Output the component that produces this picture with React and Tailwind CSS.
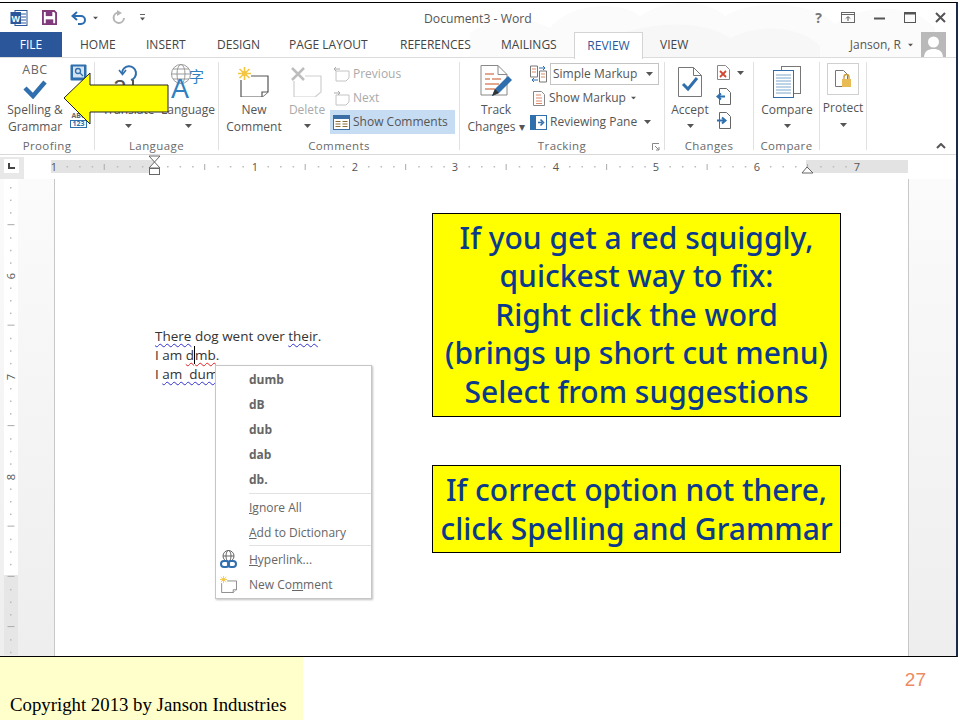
import React from "react";

const Caret = ({ className = "" }) => (
  <svg width="7" height="4" viewBox="0 0 7 4" className={className}><path d="M0 0h7L3.500 4z" fill="#555" /></svg>
);

const WordLogo = () => (
  <svg width="18" height="18" viewBox="0 0 18 18">
    <rect x="5" y="1.500" width="12" height="15" fill="#fff" stroke="#2b579a" />
    <path d="M11 5h5M11 8h5M11 11h5M11 14h5" stroke="#2b579a" />
    <rect x="0.500" y="3" width="10.500" height="12" fill="#2b579a" />
    <text x="5.700" y="12.500" textAnchor="middle" fontSize="9" fontWeight="700" fill="#fff" fontFamily="Liberation Sans">W</text>
  </svg>
);
const SaveIcon = () => (
  <svg width="15" height="15" viewBox="0 0 16 16">
    <path d="M1 1h12l2 2v12H1z" fill="#fff" stroke="#80397b" strokeWidth="2" />
    <rect x="4" y="1.500" width="7" height="5" fill="#80397b" />
    <rect x="4" y="10" width="8" height="5" fill="#80397b" />
  </svg>
);
const UndoIcon = () => (
  <svg width="16" height="14" viewBox="0 0 16 14">
    <path d="M2 5h8a4 4 0 0 1 0 8H7" fill="none" stroke="#2b6cb0" strokeWidth="2" />
    <path d="M6 1 1.500 5 6 9" fill="none" stroke="#2b6cb0" strokeWidth="2" />
  </svg>
);
const RedoIcon = () => (
  <svg width="15" height="15" viewBox="0 0 15 15">
    <path d="M8 2.500a5.200 5.200 0 1 0 5 5.500" fill="none" stroke="#b5b5b5" strokeWidth="2" />
    <path d="M6 0v6l5-3z" fill="#b5b5b5" />
  </svg>
);

const SpellIcon = () => (
  <div className="flex flex-col items-center h-[39px] pt-[2px]">
    <span className="text-[12.500px] leading-[12px] text-[#666] tracking-[0.5px]">ABC</span>
    <svg width="24" height="20" viewBox="0 0 24 20" className="mt-[3px]"><path d="M2 9l8 8L22 3" fill="none" stroke="#2f6fae" strokeWidth="4.500" /></svg>
  </div>
);
const BookIcon = () => (
  <svg width="17" height="19" viewBox="0 0 17 19">
    <rect x="0.500" y="0.500" width="16" height="16" rx="1" fill="#2f6fae" />
    <rect x="3" y="2.500" width="11" height="11" fill="#d6e4f2" />
    <circle cx="8" cy="7" r="2.500" fill="none" stroke="#2f6fae" strokeWidth="1.300" />
    <path d="M10 9l3 3" stroke="#2f6fae" strokeWidth="1.300" />
  </svg>
);
const Abc123 = () => (
  <div className="flex flex-col items-center w-[17px]">
    <span className="text-[7px] leading-[8px] font-bold text-[#666]">ABC</span>
    <span className="w-[17px] h-[8px] border border-[#2f6fae] text-[7px] leading-[6px] font-bold text-[#2f6fae] text-center">123</span>
  </div>
);
const TranslateIcon = () => (
  <svg width="34" height="36" viewBox="0 0 34 36">
    <text x="1" y="30" fontSize="25" fill="#555" fontFamily="Liberation Sans">a</text>
    <path d="M10 9a7 7 0 1 1 9 7" fill="none" stroke="#2f6fae" strokeWidth="2" />
    <path d="M7 6l3.500 4.500L14 6" fill="none" stroke="#2f6fae" strokeWidth="1.600" />
    <path d="M15 22h13M21 16v14" stroke="#555" strokeWidth="2" />
  </svg>
);
const LanguageIcon = () => (
  <svg width="36" height="36" viewBox="0 0 36 36" className="overflow-visible">
    <circle cx="11" cy="10" r="9.500" fill="none" stroke="#999" />
    <ellipse cx="11" cy="10" rx="4" ry="9.500" fill="none" stroke="#999" />
    <path d="M1.500 10h19M3 5h16M3 15h16" stroke="#999" />
    <text x="1" y="34" fontSize="27" fill="#2f7fc1" fontFamily="Liberation Sans">A</text>
    <text x="19" y="18" fontSize="15" fill="#2f7fc1" fontFamily="Noto Sans CJK SC">字</text>
  </svg>
);
const NewCommentIcon = ({ s = 1, star = "#f4c542" }) => (
  <svg width={32 * s} height={30 * s} viewBox="0 0 32 30">
    <path d="M3 9h27v16l-6 5H3z" fill="#fff" stroke="#555" strokeWidth="1.200" />
    <path d="M24 30v-5h6" fill="#fff" stroke="#555" strokeWidth="1.200" />
    <rect x="0" y="0" width="13" height="13" fill="#fff" />
    <path d="M6.500 0v13M0 6.500h13M1.500 2l10 9M11.500 2l-10 9" stroke={star} strokeWidth="1.600" />
    <circle cx="6.500" cy="6.500" r="2.500" fill={star} />
  </svg>
);
const DeleteCommentIcon = () => (
  <svg width="32" height="30" viewBox="0 0 32 30">
    <path d="M3 9h27v16l-6 5H3z" fill="#fff" stroke="#cfcfcf" strokeWidth="1.200" />
    <rect x="0" y="0" width="14" height="14" fill="#fff" />
    <path d="M1 1l12 12M13 1L1 13" stroke="#bdbdbd" strokeWidth="2.500" />
  </svg>
);
const SmallComment = ({ dir }) => (
  <svg width="17" height="15" viewBox="0 0 17 15">
    <path d="M3 4h13v7l-3 3H3z" fill="#fff" stroke="#c4c4c4" />
    <path d={dir === "l" ? "M7 2H1M3 0 1 2l2 2" : "M1 2h6M5 0l2 2-2 2"} fill="none" stroke="#aaa" />
  </svg>
);
const ShowCommentsIcon = () => (
  <svg width="17" height="15" viewBox="0 0 17 15">
    <rect x="0.500" y="0.500" width="16" height="14" fill="#fff" stroke="#3a6ea5" />
    <rect x="1" y="1" width="15" height="3" fill="#3a6ea5" />
    <path d="M2.500 6.500h5M2.500 9h5M2.500 11.500h5M9.500 6.500h5M9.500 9h5M9.500 11.500h5" stroke="#8a6d3b" />
  </svg>
);
const TrackIcon = () => (
  <svg width="32" height="34" viewBox="0 0 32 34">
    <path d="M1 .5h17l9 9V30H1z" fill="#fff" stroke="#888" />
    <path d="M18 .5v9h9" fill="none" stroke="#888" />
    <path d="M5 9h9M5 14h5M12 14h9M5 19h14M5 24h10" stroke="#d98b6a" strokeWidth="1.300" />
    <path d="M12 31l3-7 13-13 4 4-13 13z" fill="#2f6fae" />
    <path d="M12 31l3-7 4 4z" fill="#333" />
  </svg>
);
const MarkupSwapIcon = () => (
  <svg width="17" height="18" viewBox="0 0 17 18">
    <path d="M.5 1h7v11h-7z" fill="#fff" stroke="#777" />
    <path d="M9.500 6h7v11h-7z" fill="#fff" stroke="#777" />
    <path d="M2 4h4M2 7h4M11 9h4M11 12h4" stroke="#d98b6a" />
    <path d="M9 3h6M13 1l2 2-2 2M2 15h6M4 13l-2 2 2 2" fill="none" stroke="#2f6fae" />
  </svg>
);
const ShowMarkupIcon = () => (
  <svg width="12" height="15" viewBox="0 0 12 15">
    <path d="M.5.500h8l3 3v11H.5z" fill="#fff" stroke="#888" />
    <path d="M3 4h5M3 7h6M3 10h6M3 12.500h6" stroke="#d98b6a" />
  </svg>
);
const PaneIcon = () => (
  <svg width="17" height="15" viewBox="0 0 17 15">
    <rect x="0.500" y="0.500" width="16" height="14" fill="#fff" stroke="#2f6fae" />
    <rect x="1" y="1" width="5" height="13" fill="#2f6fae" />
    <path d="M8 7.500h4M10.500 4.500l3 3-3 3" fill="none" stroke="#2f6fae" strokeWidth="1.500" />
  </svg>
);
const AcceptIcon = () => (
  <svg width="24" height="30" viewBox="0 0 24 30">
    <path d="M.5.500h15l8 8v21H.5z" fill="#fff" stroke="#777" />
    <path d="M15.500.5v8h8" fill="none" stroke="#777" />
    <path d="M5 17l5 5 9-11" fill="none" stroke="#2f6fae" strokeWidth="3" />
  </svg>
);
const RejectIcon = () => (
  <svg width="13" height="15" viewBox="0 0 13 15">
    <path d="M.5.500h8l4 4v10H.5z" fill="#fff" stroke="#888" />
    <path d="M3 6l6 6M9 6l-6 6" stroke="#d2452f" strokeWidth="1.800" />
  </svg>
);
const PrevNextIcon = ({ dir }) => (
  <svg width="15" height="17" viewBox="0 0 15 17">
    <path d="M3.500.500h7l4 4v12h-11z" fill="#fff" stroke="#666" />
    <path d={dir === "l" ? "M9 8.500H2M5 5.500l-3.500 3 3.500 3" : "M1 8.500h8M6 5.500l3.500 3-3.500 3"} fill="none" stroke="#2f6fae" strokeWidth="2" />
  </svg>
);
const CompareIcon = () => (
  <svg width="28" height="32" viewBox="0 0 28 32">
    <rect x="8.500" y="0.500" width="19" height="27" fill="#fff" stroke="#777" />
    <rect x="0.500" y="4.500" width="20" height="27" fill="#fff" stroke="#2f6fae" />
    <path d="M3 9h15M3 12h15M3 15h15M3 18h15M3 21h15M3 24h15M3 27h15" stroke="#7fa6cf" />
  </svg>
);
const ProtectIcon = () => (
  <svg width="18" height="18" viewBox="0 0 18 18">
    <path d="M1.500.500h8l4 4v12h-12z" fill="#fff" stroke="#777" />
    <rect x="8" y="9" width="9" height="8" fill="#e9bb55" />
    <path d="M10 9V7a2.500 2.500 0 0 1 5 0v2" fill="none" stroke="#c79a3b" strokeWidth="1.300" />
  </svg>
);
const GlobeLink = () => (
  <svg width="17" height="19" viewBox="0 0 17 19">
    <circle cx="8.500" cy="6" r="5.500" fill="none" stroke="#666" />
    <ellipse cx="8.500" cy="6" rx="2.500" ry="5.500" fill="none" stroke="#666" />
    <path d="M3 6h11" stroke="#666" />
    <rect x="1" y="11" width="8" height="6" rx="3" fill="none" stroke="#2f6fae" strokeWidth="2" />
    <rect x="8" y="11" width="8" height="6" rx="3" fill="none" stroke="#2f6fae" strokeWidth="2" />
  </svg>
);

const Big = ({ w, icon, lines, caret, dim, className = "" }) => (
  <div className={`flex flex-col items-center shrink-0 ${className}`} style={{ width: w }}>
    <div className="h-[39px] flex items-center justify-center">{icon}</div>
    {lines.map((l) => (
      <span key={l} className={`text-[12px] leading-[17px] whitespace-nowrap ${dim ? "text-[#aaa]" : "text-[#555]"}`}>{l}</span>
    ))}
    {caret && <Caret className="mt-[6px]" />}
  </div>
);

const Group = ({ w, label, children, border = true }) => (
  <div className={`flex flex-col shrink-0 h-[88px] ${border ? "border-r border-[#e1e1e1]" : ""}`} style={{ width: w }}>
    <div className="flex h-[73px]">{children}</div>
    <div className="mt-auto text-center text-[11.500px] leading-[14px] tracking-[0.4px] text-[#6a6a6a] -mb-[3px]">{label}</div>
  </div>
);

const Row = ({ icon, text, dim, className = "" }) => (
  <div className={`flex items-center h-[24px] gap-[3px] text-[12px] whitespace-nowrap ${dim ? "text-[#aaa]" : "text-[#555]"} ${className}`}>
    {icon}
    <span>{text}</span>
  </div>
);

const Ruler = () => {
  const nums = [[54, 1], [255, 1], [355, 2], [455, 3], [556, 4], [656, 5], [757, 6], [857, 7]];
  return (
    <svg width="956" height="24" viewBox="0 0 956 24" className="block">
      <rect x="51" y="5" width="857" height="13" fill="#fff" />
      <rect x="51" y="5" width="104" height="13" fill="#e3e3e3" />
      <rect x="806" y="5" width="102" height="13" fill="#e3e3e3" />
      {Array.from({ length: 65 }, (_, i) => 54 + i * 12.56).map((x, i) =>
        i % 8 === 0 ? null : i % 4 === 0 ? (
          <path key={i} d={`M${x} 9v6`} stroke="#aaa" />
        ) : (
          <rect key={i} x={x} y="11" width="1.500" height="1.500" fill="#bbb" />
        )
      )}
      {nums.map(([x, n], i) => (
        <text key={i} x={x} y="15.500" textAnchor="middle" fontSize="11" fill="#555" fontFamily="Open Sans">{n}</text>
      ))}
      <path d="M149 1h11l-5.500 6z M149 13l5.500-6 5.500 6z" fill="#fff" stroke="#666" />
      <rect x="149.500" y="13.500" width="10" height="6" fill="#fff" stroke="#666" />
      <path d="M802 18l5-6 6 6z" fill="#fff" stroke="#666" />
    </svg>
  );
};

const VRuler = () => {
  const marks = [];
  for (let i = 0; i < 38; i++) marks.push(i);
  return (
    <svg width="14" height="476" viewBox="0 0 14 476" className="block">
      <rect width="14" height="396" fill="#fff" />
      <rect y="396" width="14" height="80" fill="#e6e6e6" />
      {marks.map((i) => {
        const y = 8 + i * 12.56;
        return i % 4 === 3 ? (
          <path key={i} d={`M3.500 ${y}h7`} stroke="#aaa" />
        ) : (
          <rect key={i} x="6" y={y} width="1.500" height="1.500" fill="#bbb" />
        );
      })}
      {[[97, 6], [198, 7], [298, 8]].map(([y, n]) => (
        <rect key={n} x="2" y={y - 5} width="10" height="10" fill="#fff" />
      ))}
      {[[97, 6], [198, 7], [298, 8]].map(([y, n]) => (
        <text key={n} x="0" y="0" transform={`translate(11 ${y}) rotate(-90)`} textAnchor="middle" fontSize="11" fill="#555" fontFamily="Open Sans">{n}</text>
      ))}
    </svg>
  );
};

const Sq = ({ c, children }) => (
  <span className={`underline decoration-wavy decoration-1 underline-offset-[2px] ${c === "r" ? "decoration-[#e02020]" : "decoration-[#3030d0]"}`}>{children}</span>
);

const MenuItem = ({ icon, children, bold }) => (
  <div className={`flex items-center h-[25px] text-[12px] whitespace-nowrap text-[#666] ${bold ? "font-bold" : ""}`}>
    <span className="w-[33px] flex justify-start pl-[4px]">{icon}</span>
    <span>{children}</span>
  </div>
);

export default function App() {
  return (
    <div className="relative w-[960px] h-[720px] bg-white overflow-hidden font-['Open_Sans',sans-serif]">
      <div className="h-[657px] pt-[2px]">
        <div className="h-[655px] w-[958px] border-t-[1.500px] border-b-[1.500px] border-r-[2px] border-black border-r-[#1c2a4a] flex flex-col">
          <div className="relative h-[55px] shrink-0">
            <svg width="956" height="55" viewBox="0 0 956 55" className="absolute left-0 top-0">
              <path d="M470 30c30-20 60-15 80-5 20-25 70-28 90-12 30-20 70-15 85 0 30-18 90-14 110 8 30-22 80-20 100 4v30H470z" fill="#fbfbfb" />
              <path d="M600 40c40-22 100-25 130-5 30-15 70-12 90 8v12H600z" fill="#f7f7f7" />
            </svg>
            {/* title bar */}
            <div className="relative h-[29px] flex items-center pl-[10px] text-[#555]">
              <WordLogo />
              <span className="ml-[14px]"><SaveIcon /></span>
              <span className="ml-[14px]"><UndoIcon /></span>
              <Caret className="ml-[5px] scale-75" />
              <span className="ml-[12px]"><RedoIcon /></span>
              <span className="ml-[14px] flex flex-col gap-[2px]"><span className="block w-[5px] h-px bg-[#666]" /><Caret className="w-[5px]" /></span>
              <span className="absolute left-[424px] top-[8px] text-[12.200px] leading-[16px] text-[#555]">Document3 - Word</span>
              <div className="ml-auto flex items-center pr-[10px] gap-[19px]">
                <span className="text-[14px] font-bold text-[#777] leading-none">?</span>
                <svg width="14" height="11" viewBox="0 0 14 11"><rect x=".5" y=".5" width="13" height="10" fill="none" stroke="#666" /><path d="M1 2.500h12" stroke="#666" /><path d="M7 9V5M5 6.500l2-2 2 2" fill="none" stroke="#555" /></svg>
                <svg width="11" height="11" viewBox="0 0 11 11"><path d="M0 6.500h11" stroke="#555" strokeWidth="2" /></svg>
                <svg width="12" height="11" viewBox="0 0 12 11"><rect x=".5" y=".5" width="11" height="10" fill="none" stroke="#555" /><path d="M0 1.500h12" stroke="#555" strokeWidth="2" /></svg>
                <svg width="11" height="11" viewBox="0 0 11 11"><path d="M1 1l9 9M10 1l-9 9" stroke="#555" strokeWidth="2" /></svg>
              </div>
            </div>
            {/* tabs */}
            <div className="relative h-[26px] flex items-stretch text-[12px] text-[#444] border-b border-[#dcdcdc]">
              <div className="w-[62px] bg-[#2b579a] text-white flex items-center justify-center">FILE</div>
              <span className="ml-[18px] w-[66px] flex items-center">HOME</span>
              <span className="w-[71px] flex items-center">INSERT</span>
              <span className="w-[72px] flex items-center">DESIGN</span>
              <span className="w-[111px] flex items-center">PAGE LAYOUT</span>
              <span className="w-[101px] flex items-center">REFERENCES</span>
              <span className="w-[73px] flex items-center">MAILINGS</span>
              <div className="w-[69px] h-[27px] border border-b-0 border-[#d4d4d4] bg-white text-[#2b579a] flex items-center justify-center">REVIEW</div>
              <span className="ml-[17px] flex items-center">VIEW</span>
              <span className="ml-auto flex items-center gap-[6px] text-[#555]">Janson, R <Caret className="scale-75" /></span>
              <div className="ml-[7px] mr-[10px] w-[25px] bg-[#b9b9b9] relative overflow-hidden">
                <svg width="25" height="26" viewBox="0 0 25 26"><circle cx="12.500" cy="10" r="5.500" fill="#fff" /><path d="M3 26c0-7 4-9 9.500-9S22 19 22 26z" fill="#fff" /></svg>
              </div>
            </div>
          </div>
          {/* ribbon */}
          <div className="h-[97px] shrink-0 flex pt-[4px] border-b border-[#d9d9d9] relative">
            <Group w={95} label="Proofing">
              <Big w={70} icon={<SpellIcon />} lines={["Spelling &", "Grammar"]} />
              <div className="flex flex-col items-center pt-[2px] gap-[29px]"><BookIcon /><Abc123 /></div>
            </Group>
            <Group w={124} label="Language">
              <Big w={57} className="ml-[5px]" icon={<TranslateIcon />} lines={["Translate"]} caret />
              <Big w={62} icon={<LanguageIcon />} lines={["Language"]} caret />
            </Group>
            <Group w={241} label="Comments">
              <Big w={70} icon={<NewCommentIcon />} lines={["New", "Comment"]} />
              <Big w={36} dim icon={<DeleteCommentIcon />} lines={["Delete"]} caret />
              <div className="flex flex-col ml-[5px] w-[125px]">
                <Row dim className="pl-[3px]" icon={<SmallComment dir="l" />} text="Previous" />
                <Row dim className="pl-[3px]" icon={<SmallComment dir="r" />} text="Next" />
                <Row className="pl-[3px] bg-[#c6dcf2]" icon={<ShowCommentsIcon />} text="Show Comments" />
              </div>
            </Group>
            <Group w={205} label="Tracking">
              <div className="w-[70px] shrink-0"><Big w={72} icon={<TrackIcon />} lines={["Track", "Changes ▾"]} /></div>
              <div className="flex flex-col w-[129px]">
                <div className="flex items-center h-[24px]">
                  <MarkupSwapIcon />
                  <div className="ml-[3px] w-[109px] h-[22px] border border-[#c4c4c4] flex items-center pl-[2px] pr-[5px] text-[12px] text-[#555]">Simple Markup<Caret className="ml-auto" /></div>
                </div>
                <div className="flex items-center h-[24px] pl-[3px] text-[12px] text-[#555] gap-[4px]"><ShowMarkupIcon /><span>Show Markup</span><Caret className="scale-75" /></div>
                <div className="flex items-center h-[24px] text-[12px] text-[#555] gap-[3px]"><PaneIcon /><span>Reviewing Pane</span><Caret className="ml-auto mr-[8px]" /></div>
              </div>
            </Group>
            <Group w={89} label="Changes">
              <Big w={50} icon={<AcceptIcon />} lines={["Accept"]} caret />
              <div className="flex flex-col items-center pt-[3px] gap-[7px] w-[17px]">
                <div className="flex h-[16px]"><RejectIcon /></div>
                <PrevNextIcon dir="l" />
                <PrevNextIcon dir="r" />
              </div>
              <Caret className="mt-[9px] ml-[5px]" />
            </Group>
            <Group w={66} label="Compare">
              <Big w={66} icon={<CompareIcon />} lines={["Compare"]} caret />
            </Group>
            <Group w={47} label="">
              <div className="flex flex-col items-center w-full pt-[1px]">
                <div className="w-[32px] h-[32px] border border-[#d0d0d0] flex items-center justify-center"><ProtectIcon /></div>
                <span className="text-[12px] leading-[17px] mt-[4px] text-[#555]">Protect</span>
                <Caret className="mt-[7px]" />
              </div>
            </Group>
            <svg width="10" height="6" viewBox="0 0 10 6" className="absolute left-[936px] top-[85px]"><path d="M1 5l4-4 4 4" fill="none" stroke="#555" strokeWidth="2" /></svg>
            <svg width="8" height="8" viewBox="0 0 8 8" className="absolute left-[652px] top-[85px]"><path d="M.5 7V.5H7M3 3l4 4M7 4v3H4" fill="none" stroke="#888" /></svg>
          </div>
          {/* ruler row */}
          <div className="h-[24px] shrink-0 relative bg-white">
            <Ruler />
            <div className="absolute left-0 top-[2px] w-[24px] h-[22px] bg-[#e8e8e8]" />
            <div className="absolute left-[4px] top-[4px] w-[15px] h-[14px] bg-white flex items-center justify-center">
              <svg width="7" height="6" viewBox="0 0 7 6"><path d="M1 0v5h6" fill="none" stroke="#444" strokeWidth="2" /></svg>
            </div>
          </div>
          {/* document */}
          <div className="flex-1 flex min-h-0 bg-linear-to-b from-[#fbfbfb] to-[#eeeeee]">
            <div className="w-[54px] shrink-0 pl-[4px]"><VRuler /></div>
            <div className="relative w-[855px] shrink-0 bg-white border-x border-[#c8c8c8] pt-[147px] pl-[100px] text-[13.500px] leading-[19px] text-[#333] whitespace-pre">
              <div className="pt-[1px]"><Sq>There</Sq> dog went over <Sq>their</Sq>.</div>
              <div>I am <Sq c="r">d<span className="border-l border-black" />mb</Sq>.</div>
              <div>I <Sq>am  dumb</Sq></div>
            </div>
          </div>
        </div>
      </div>

      {/* footer */}
      <div className="h-[63px] flex">
        <div className="w-[303px] bg-[#ffffcc] flex items-end pb-[5px] pl-[10px] font-['Liberation_Serif',serif] text-[18.800px] leading-[20px] text-black whitespace-nowrap">Copyright 2013 by Janson Industries</div>
        <div className="ml-auto pr-[34px] pt-[12px] font-['Liberation_Sans',sans-serif] text-[19px] leading-[22px] text-[#ee8a62]">27</div>
      </div>

      {/* context menu */}
      <div className="absolute left-[215px] top-[365px] w-[157px] h-[234px] bg-white border border-[#c6c6c6] shadow-[1px_1px_2px_rgba(0,0,0,0.25)] py-[1px]">
        <MenuItem bold>dumb</MenuItem>
        <MenuItem bold>dB</MenuItem>
        <MenuItem bold>dub</MenuItem>
        <MenuItem bold>dab</MenuItem>
        <MenuItem bold>db.</MenuItem>
        <div className="ml-[33px] mt-[1px] mb-[1px] h-px bg-[#e2e2e2]" />
        <MenuItem><span className="underline">I</span>gnore All</MenuItem>
        <MenuItem><span className="underline">A</span>dd to Dictionary</MenuItem>
        <div className="ml-[33px] mb-[1px] h-px bg-[#e2e2e2]" />
        <MenuItem icon={<GlobeLink />}><span className="underline">H</span>yperlink...</MenuItem>
        <MenuItem icon={<NewCommentIcon s={0.55} />}>New Co<span className="underline">m</span>ment</MenuItem>
      </div>

      {/* callouts */}
      <div className="absolute left-[432px] top-[213px] w-[409px] h-[204px] bg-[#ffff00] border border-black flex flex-col justify-center items-center text-[30px] font-medium leading-[38.400px] text-[#0b3a8c] font-['Noto_Sans',sans-serif] whitespace-nowrap">
        <span>If you get a red squiggly,</span>
        <span>quickest way to fix:</span>
        <span>Right click the word</span>
        <span>(brings up short cut menu)</span>
        <span>Select from suggestions</span>
      </div>
      <div className="absolute left-[432px] top-[465px] w-[409px] h-[88px] pt-[1px] bg-[#ffff00] border border-black flex flex-col justify-center items-center text-[30px] font-medium leading-[38.400px] text-[#0b3a8c] font-['Noto_Sans',sans-serif] whitespace-nowrap">
        <span>If correct option not there,</span>
        <span>click Spelling and Grammar</span>
      </div>

      {/* arrow */}
      <svg width="110" height="56" viewBox="0 0 110 56" className="absolute left-[62px] top-[71px]">
        <path d="M2 27 28 2v12h78v27H28v12z" fill="#ffff00" stroke="#222" strokeWidth="1" />
      </svg>
    </div>
  );
}
